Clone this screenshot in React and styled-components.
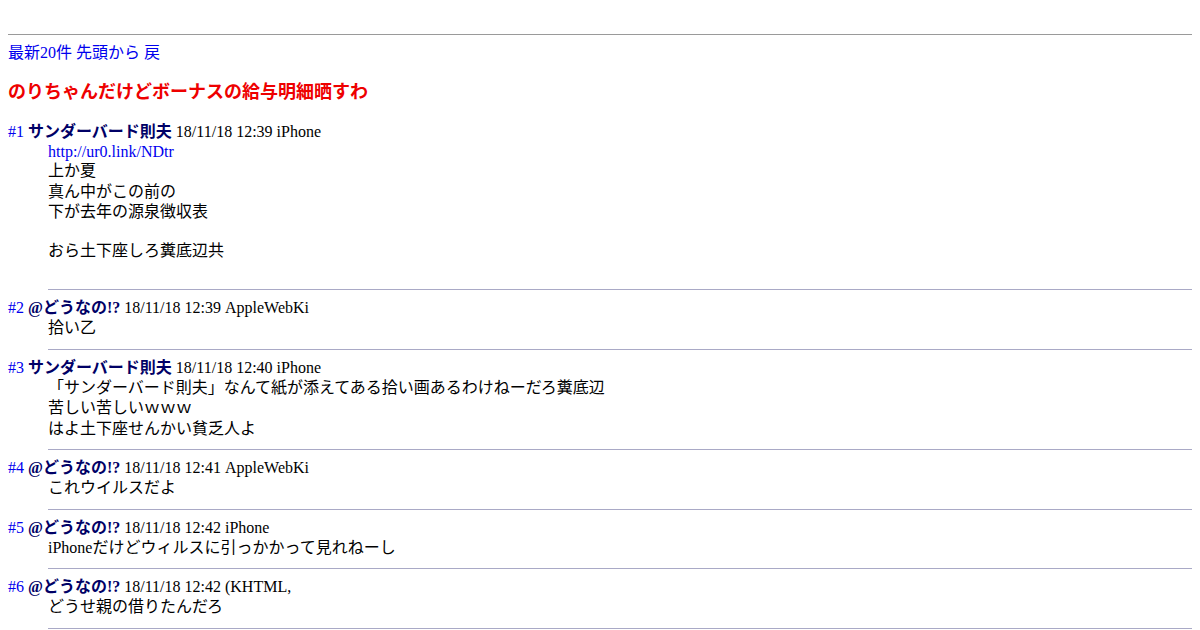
import React from "react";
import styled, { createGlobalStyle } from "styled-components";

const Global = createGlobalStyle`
  html, body { margin: 0; padding: 0; background: #fff; }
  body {
    font-family: "Liberation Serif", "Noto Sans CJK JP", serif;
    font-size: 16px;
    color: #000;
  }
`;

const Page = styled.div`
  padding: 8px;
`;

const TopSpace = styled.div`
  height: 18px;
`;

const TopRule = styled.div`
  margin: 8px 0 8px;
  border-top: 1px solid #9a9a9a;
`;

const NavBar = styled.nav`
  display: flex;
  gap: 4px;
  line-height: 20px;
`;

const Link = styled.a`
  color: #0000ee;
  text-decoration: none;
  cursor: pointer;
`;

const Title = styled.h1`
  margin: 18px 0 19px;
  font-size: 18px;
  line-height: 22px;
  font-weight: bold;
  color: #ee0000;
`;

const Thread = styled.dl`
  margin: 0;
`;

const Header = styled.dt`
  line-height: 20px;
  white-space: nowrap;
`;

const Name = styled.b`
  color: #000066;
`;

const Body = styled.dd`
  margin: 0 0 0 40px;
`;

const Line = styled.div`
  line-height: ${(p) => (p.$blank ? "18px" : p.$latin ? "19px" : "20.5px")};
  min-height: ${(p) => (p.$blank ? "18px" : "0")};
`;

const Rule = styled.div`
  margin: 10px 0 8px;
  border-top: 1px solid #a9a9c6;
`;

const posts = [
  {
    no: 1,
    name: "サンダーバード則夫",
    date: "18/11/18 12:39 iPhone",
    lines: [
      { url: "http://ur0.link/NDtr" },
      "上か夏",
      "真ん中がこの前の",
      "下が去年の源泉徴収表",
      "",
      "おら土下座しろ糞底辺共",
      "",
    ],
  },
  { no: 2, name: "@どうなの!?", date: "18/11/18 12:39 AppleWebKi", lines: ["拾い乙"] },
  {
    no: 3,
    name: "サンダーバード則夫",
    date: "18/11/18 12:40 iPhone",
    lines: [
      "「サンダーバード則夫」なんて紙が添えてある拾い画あるわけねーだろ糞底辺",
      "苦しい苦しいｗｗｗ",
      "はよ土下座せんかい貧乏人よ",
    ],
  },
  { no: 4, name: "@どうなの!?", date: "18/11/18 12:41 AppleWebKi", lines: ["これウイルスだよ"] },
  { no: 5, name: "@どうなの!?", date: "18/11/18 12:42 iPhone", lines: ["iPhoneだけどウィルスに引っかかって見れねーし"] },
  { no: 6, name: "@どうなの!?", date: "18/11/18 12:42 (KHTML,", lines: ["どうせ親の借りたんだろ"] },
];

function Post({ post }) {
  return (
    <>
      <Header>
        <Link>#{post.no}</Link> <Name>{post.name}</Name> {post.date}
      </Header>
      <Body>
        {post.lines.map((l, i) =>
          typeof l === "object" ? (
            <Line key={i} $latin>
              <Link>{l.url}</Link>
            </Line>
          ) : l === "" ? (
            <Line key={i} $blank />
          ) : (
            <Line key={i}>{l}</Line>
          )
        )}
        <Rule />
      </Body>
    </>
  );
}

export default function App() {
  return (
    <Page>
      <Global />
      <TopSpace />
      <TopRule />
      <NavBar>
        <Link>最新20件</Link>
        <Link>先頭から</Link>
        <Link>戻</Link>
      </NavBar>
      <Title>のりちゃんだけどボーナスの給与明細晒すわ</Title>
      <Thread>
        {posts.map((p) => (
          <Post key={p.no} post={p} />
        ))}
      </Thread>
    </Page>
  );
}
